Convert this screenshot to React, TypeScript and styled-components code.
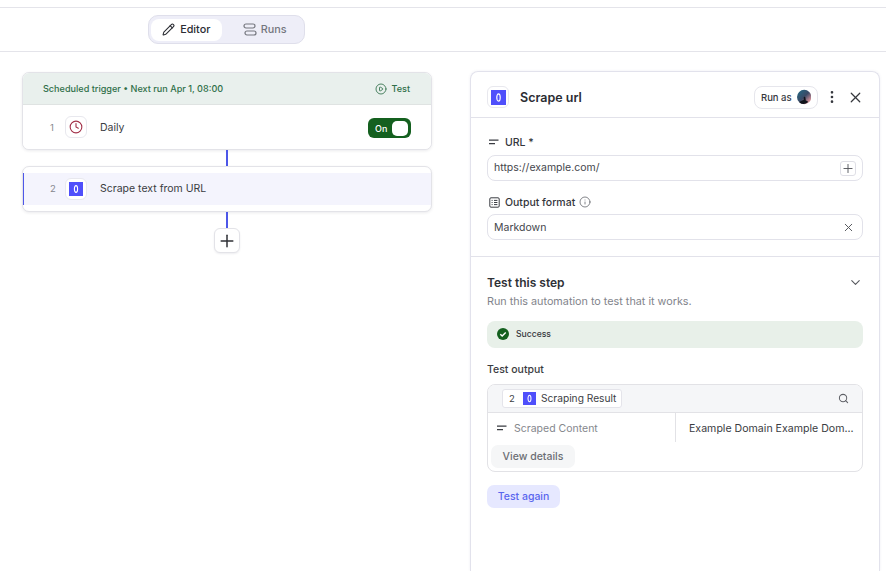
import React from "react";
import styled, { createGlobalStyle } from "styled-components";
import { ChevronDown, CirclePlay, Clock, EllipsisVertical, Info, Pencil, Plus, Search, X } from "lucide-react";

const GlobalStyle = createGlobalStyle`
  html, body {
    margin: 0;
    height: 100%;
    overflow: hidden;
    background: #fff;
  }
  body {
    font-family: "Inter", "Liberation Sans", sans-serif;
    color: #2b2d33;
    -webkit-font-smoothing: antialiased;
  }
  * { box-sizing: border-box; }
`;

const Page = styled.div`
  height: 100vh;
  display: flex;
  flex-direction: column;
  padding-top: 7px;
`;

const Toolbar = styled.div`
  height: 45px;
  flex: none;
  border-top: 1px solid #e4e4ea;
  border-bottom: 1px solid #e4e4ea;
  padding: 7px 0 0 148px;
`;

const Segmented = styled.div`
  width: 157px;
  height: 29px;
  display: flex;
  align-items: center;
  padding: 0 2px;
  background: #eeeef8;
  border: 1px solid #dfdfeb;
  border-radius: 10px;
`;

const Segment = styled.div<{ $active?: boolean }>`
  width: ${(p) => (p.$active ? "72px" : "76px")};
  height: 22px;
  display: flex;
  align-items: center;
  justify-content: center;
  gap: ${(p) => (p.$active ? "5px" : "4px")};
  border-radius: 8px;
  font-size: 10.8px;
  font-weight: 500;
  background: ${(p) => (p.$active ? "#fff" : "transparent")};
  color: ${(p) => (p.$active ? "#2b2d33" : "#74767e")};
  margin-left: ${(p) => (p.$active ? "0" : "6px")};
`;

const Body = styled.div`
  flex: 1;
  display: flex;
  min-height: 0;
`;

const Canvas = styled.div`
  width: 470px;
  flex: none;
  padding: 20px 0 0 22px;
  display: flex;
  flex-direction: column;
  align-items: flex-start;
`;

const Card = styled.div`
  width: 410px;
  background: #fff;
  border: 1px solid #e3e3e8;
  border-radius: 7px;
  box-shadow: 0 1px 3px rgba(30, 30, 60, 0.09);
  overflow: hidden;
`;

const TriggerCard = styled(Card)`
  height: 78px;
`;

const ActionCard = styled(Card)`
  height: 46px;
  padding-top: 6px;
`;

const TriggerHead = styled.div`
  height: 32px;
  padding: 0 21px 0 20px;
  display: flex;
  align-items: center;
  justify-content: space-between;
  background: #e9f0ed;
  border-bottom: 1px solid #dfe3e2;
  color: #2f6f49;
  font-size: 9.1px;
  font-weight: 500;
`;

const TestLink = styled.span`
  display: flex;
  align-items: center;
  gap: 4px;
`;

const StepRow = styled.div<{ $selected?: boolean }>`
  height: ${(p) => (p.$selected ? "32px" : "44px")};
  display: flex;
  align-items: center;
  padding: 0 20px ${(p) => (p.$selected ? "1px" : "0")} ${(p) => (p.$selected ? "26px" : "27px")};
  background: ${(p) => (p.$selected ? "#f4f4fd" : "#fff")};
  border-left: ${(p) => (p.$selected ? "1px solid #4d57e8" : "0")};
  font-size: 10.5px;
  color: #3a3c42;
`;

const StepNumber = styled.span`
  width: 15px;
  font-size: 9.5px;
  color: #85878d;
`;

const IconBox = styled.span`
  width: 22px;
  height: 22px;
  flex: none;
  display: flex;
  align-items: center;
  justify-content: center;
  background: #fff;
  border: 1px solid #e8e8ee;
  border-radius: 6px;
`;

const StepLabel = styled.span`
  margin-left: 13px;
  flex: 1;
`;

const Toggle = styled.div`
  width: 43px;
  height: 20px;
  margin-top: 2px;
  display: flex;
  align-items: center;
  justify-content: space-between;
  padding: 0 3px 0 7px;
  border-radius: 6px;
  background: #14601f;
  color: #fff;
  font-size: 9px;
  font-weight: 500;
`;

const Knob = styled.span`
  width: 16px;
  height: 15px;
  background: #fff;
  border-radius: 5px;
`;

const Connector = styled.div<{ $h: number }>`
  width: 2px;
  height: ${(p) => p.$h}px;
  margin-left: 204px;
  background: #4d57e8;
`;

const AddButton = styled.div`
  width: 26px;
  height: 25px;
  margin-left: 192px;
  display: flex;
  align-items: center;
  justify-content: center;
  background: #fff;
  border: 1px solid #e3e3e8;
  border-radius: 6px;
  box-shadow: 0 1px 2px rgba(30, 30, 60, 0.08);
  color: #2f3136;
`;

const Panel = styled.div`
  width: 410px;
  flex: none;
  margin-top: 19px;
  border: 1px solid #e2e2ec;
  border-bottom: 0;
  border-radius: 8px 8px 0 0;
  box-shadow: 0 0 3px rgba(60, 60, 120, 0.08);
`;

const PanelHead = styled.div`
  height: 46px;
  display: flex;
  align-items: center;
  padding: 5px 15px 0 16px;
  border-bottom: 1px solid #e2e2ea;
`;

const PanelTitle = styled.h1`
  flex: 1;
  margin: 0 0 0 11px;
  font-size: 12.5px;
  font-weight: 600;
  color: #2b2d33;
`;

const RunAs = styled.div`
  width: 64px;
  height: 23px;
  display: flex;
  align-items: center;
  justify-content: flex-end;
  gap: 5px;
  padding: 0 6px;
  border: 1px solid #e6e6ec;
  border-radius: 8px;
  font-size: 9.5px;
  font-weight: 500;
  color: #36383e;
  white-space: nowrap;
`;

const HeadIcon = styled.span`
  display: flex;
  margin-left: 6px;
  color: #35373d;
  & + & {
    margin-left: 7px;
  }
`;

const FormSection = styled.div`
  height: 139px;
  padding: 15px 16px 0;
  border-bottom: 1px solid #e2e2ea;
`;

const FieldLabel = styled.div<{ $low?: boolean }>`
  height: ${(p) => (p.$low ? "17px" : "18px")};
  padding-top: ${(p) => (p.$low ? "1px" : "0")};
  display: flex;
  align-items: center;
  font-size: 10.5px;
  font-weight: 500;
  color: #33353b;
`;

const LabelIcon = styled.span`
  width: 18px;
  padding-left: 2px;
  display: flex;
`;

const InfoIcon = styled.span`
  display: flex;
  margin-left: 4px;
  color: #5a5c63;
`;

const Field = styled.div<{ $raised?: boolean }>`
  width: 376px;
  height: 26px;
  margin-top: 4px;
  margin-bottom: 12px;
  padding: 0 6px ${(p) => (p.$raised ? "1px" : "0")};
  display: flex;
  align-items: center;
  justify-content: space-between;
  border: 1px solid #e2e2ea;
  border-radius: 8px;
  font-size: 10.5px;
  color: #44464c;
`;

const FieldAddon = styled.span`
  width: 16px;
  height: 15px;
  margin-top: 2px;
  display: flex;
  align-items: center;
  justify-content: center;
  border: 1px solid #dfdfe6;
  border-radius: 3px;
  color: #55575d;
`;

const FieldClear = styled.span`
  width: 16px;
  display: flex;
  justify-content: center;
  color: #55575d;
`;

const TestSection = styled.div`
  padding: 16px 16px 0;
`;

const TestHead = styled.div`
  display: flex;
  align-items: center;
  justify-content: space-between;
  height: 18px;
  font-size: 12px;
  font-weight: 600;
  color: #2f3136;
`;

const Hint = styled.p`
  margin: 4px 0 0;
  height: 16px;
  font-size: 10.8px;
  color: #82848b;
`;

const Banner = styled.div`
  width: 376px;
  height: 27px;
  margin-top: 10px;
  padding: 0 0 1px 10px;
  display: flex;
  align-items: center;
  gap: 7px;
  background: #e8f0e9;
  border-radius: 8px;
  font-size: 8.6px;
  font-weight: 500;
  color: #34363b;
`;

const OutputTitle = styled.div`
  margin-top: 15px;
  height: 17px;
  font-size: 10.5px;
  font-weight: 500;
  color: #3a3c42;
`;

const OutputTable = styled.div`
  width: 376px;
  height: 88px;
  margin-top: 4px;
  border: 1px solid #e2e2e6;
  border-radius: 8px;
  overflow: hidden;
`;

const OutputHead = styled.div`
  height: 28px;
  padding: 0 13px 0 14px;
  display: flex;
  align-items: center;
  justify-content: space-between;
  background: #f5f6f8;
  border-bottom: 1px solid #e2e2e6;
  color: #5f6167;
`;

const Chip = styled.div`
  width: 120px;
  height: 19px;
  padding: 0 3px 1px 5px;
  display: flex;
  align-items: center;
  background: #fff;
  border: 1px solid #e4e4ea;
  border-radius: 3px;
  font-size: 10.2px;
  color: #3c3e44;
  white-space: nowrap;
`;

const ChipNumber = styled.span`
  width: 15px;
  padding-left: 1px;
  font-size: 9.5px;
`;

const ChipName = styled.span`
  margin-left: 5px;
`;

const OutputRow = styled.div`
  height: 29px;
  display: flex;
  font-size: 10.5px;
`;

const OutputKey = styled.div`
  width: 188px;
  padding: 1px 0 0 9px;
  display: flex;
  align-items: center;
  gap: 7px;
  border-right: 1px solid #e2e2e6;
  color: #85878d;
`;

const OutputValue = styled.div`
  flex: 1;
  min-width: 0;
  padding: 1px 0 0 13px;
  display: flex;
  align-items: center;
  font-size: 10.6px;
  color: #3a3c42;
  white-space: nowrap;
`;

const SoftButton = styled.div`
  width: 84px;
  height: 23px;
  margin: 3px 0 0 3px;
  display: flex;
  align-items: center;
  justify-content: center;
  background: #f5f6f7;
  border-radius: 7px;
  font-size: 10.5px;
  font-weight: 500;
  color: #6c6e74;
`;

const PrimaryButton = styled.div`
  width: 73px;
  height: 23px;
  margin-top: 13px;
  display: flex;
  align-items: center;
  justify-content: center;
  background: #e6e8ff;
  border-radius: 7px;
  font-size: 10.5px;
  font-weight: 500;
  color: #5a66ee;
`;

const Logo = ({ size = 14 }: { size?: number }) => (
  <svg width={size} height={size} viewBox="0 0 14 14" aria-hidden="true">
    <rect width="14" height="14" fill="#4f4ffb" />
    <ellipse cx="7" cy="7" rx="1.6" ry="3.4" fill="none" stroke="#fff" strokeWidth="1.1" />
  </svg>
);

const RunsIcon = () => (
  <svg width="14" height="13" viewBox="0 0 14 13" fill="none" stroke="#74767e" strokeWidth="1.2" aria-hidden="true">
    <rect x="1" y="1" width="11" height="4" rx="2" />
    <rect x="2" y="8" width="11" height="4" rx="2" />
  </svg>
);

const TextIcon = ({ color = "#3a3c42" }: { color?: string }) => (
  <svg width="10" height="6" viewBox="0 0 10 6" fill="none" stroke={color} strokeWidth="1.2" aria-hidden="true">
    <path d="M0 1.2h9.5M0 4.6h6" />
  </svg>
);

const FormatIcon = () => (
  <svg width="11" height="11" viewBox="0 0 11 11" fill="none" stroke="#3a3c42" strokeWidth="1" aria-hidden="true">
    <rect x="0.8" y="0.8" width="9.4" height="9.4" rx="1.2" />
    <path d="M2.6 3.4h1M5 3.4h3.4M2.6 5.500h1M5 5.500h3.4M2.6 7.600h1M5 7.600h3.4" />
  </svg>
);

const SuccessIcon = () => (
  <svg width="12" height="12" viewBox="0 0 12 12" aria-hidden="true">
    <circle cx="6" cy="6" r="6" fill="#14601f" />
    <path d="M3.3 6.2l1.900 1.900 3.500-3.700" fill="none" stroke="#fff" strokeWidth="1.4" />
  </svg>
);

const Avatar = () => (
  <svg width="16" height="16" viewBox="0 0 16 16" aria-hidden="true">
    <defs>
      <linearGradient id="dusk" x1="0" y1="0" x2="1" y2="1">
        <stop offset="0" stopColor="#1f6a86" />
        <stop offset="0.5" stopColor="#3b4a66" />
        <stop offset="0.8" stopColor="#c98a94" />
        <stop offset="1" stopColor="#e6a7a0" />
      </linearGradient>
    </defs>
    <circle cx="8" cy="8" r="8" fill="url(#dusk)" />
    <path d="M2.500 14c2-2.200 3.500-2 5-2.600V8.600c0-1 1.800-1 1.800 0l.5 3.400c1.200.3 2 .8 2.700 1.700A8 8 0 0 1 2.500 14z" fill="#10141c" />
  </svg>
);

export default function App() {
  return (
    <Page>
      <GlobalStyle />
      <Toolbar>
        <Segmented>
          <Segment $active>
            <Pencil size={13} strokeWidth={2} color="#2b2d33" />
            Editor
          </Segment>
          <Segment>
            <RunsIcon />
            Runs
          </Segment>
        </Segmented>
      </Toolbar>
      <Body>
        <Canvas>
          <TriggerCard>
            <TriggerHead>
              <span>Scheduled trigger • Next run Apr 1, 08:00</span>
              <TestLink>
                <CirclePlay size={12} strokeWidth={1.7} />
                Test
              </TestLink>
            </TriggerHead>
            <StepRow>
              <StepNumber>1</StepNumber>
              <IconBox>
                <Clock size={14} strokeWidth={1.9} color="#a3324a" />
              </IconBox>
              <StepLabel>Daily</StepLabel>
              <Toggle>
                On
                <Knob />
              </Toggle>
            </StepRow>
          </TriggerCard>
          <Connector $h={16} />
          <ActionCard>
            <StepRow $selected>
              <StepNumber>2</StepNumber>
              <IconBox>
                <Logo />
              </IconBox>
              <StepLabel>Scrape text from URL</StepLabel>
            </StepRow>
          </ActionCard>
          <Connector $h={16} />
          <AddButton>
            <Plus size={20} strokeWidth={1.8} />
          </AddButton>
        </Canvas>
        <Panel>
          <PanelHead>
            <IconBox>
              <Logo size={15} />
            </IconBox>
            <PanelTitle>Scrape url</PanelTitle>
            <RunAs>
              Run as
              <Avatar />
            </RunAs>
            <HeadIcon>
              <EllipsisVertical size={16} strokeWidth={2} />
            </HeadIcon>
            <HeadIcon>
              <X size={17} strokeWidth={1.7} />
            </HeadIcon>
          </PanelHead>
          <FormSection>
            <FieldLabel>
              <LabelIcon>
                <TextIcon />
              </LabelIcon>
              URL *
            </FieldLabel>
            <Field $raised>
              https://example.com/
              <FieldAddon>
                <Plus size={15} strokeWidth={1.6} />
              </FieldAddon>
            </Field>
            <FieldLabel $low>
              <LabelIcon>
                <FormatIcon />
              </LabelIcon>
              Output format
              <InfoIcon>
                <Info size={12} strokeWidth={1.5} />
              </InfoIcon>
            </FieldLabel>
            <Field>
              Markdown
              <FieldClear>
                <X size={13} strokeWidth={1.8} />
              </FieldClear>
            </Field>
          </FormSection>
          <TestSection>
            <TestHead>
              Test this step
              <ChevronDown size={15} strokeWidth={1.7} color="#55575d" />
            </TestHead>
            <Hint>Run this automation to test that it works.</Hint>
            <Banner>
              <SuccessIcon />
              Success
            </Banner>
            <OutputTitle>Test output</OutputTitle>
            <OutputTable>
              <OutputHead>
                <Chip>
                  <ChipNumber>2</ChipNumber>
                  <Logo size={13} />
                  <ChipName>Scraping Result</ChipName>
                </Chip>
                <Search size={11} strokeWidth={2.2} />
              </OutputHead>
              <OutputRow>
                <OutputKey>
                  <TextIcon />
                  Scraped Content
                </OutputKey>
                <OutputValue>Example Domain Example Dom...</OutputValue>
              </OutputRow>
              <SoftButton>View details</SoftButton>
            </OutputTable>
            <PrimaryButton>Test again</PrimaryButton>
          </TestSection>
        </Panel>
      </Body>
    </Page>
  );
}
